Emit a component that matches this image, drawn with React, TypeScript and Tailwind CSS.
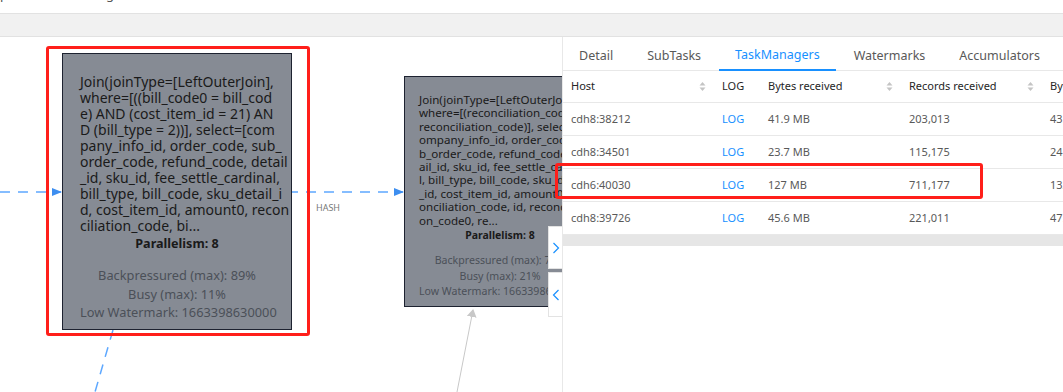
import React from "react";

const node1Lines = [
  "Join(joinType=[LeftOuterJoin],",
  "where=[((bill_code0 = bill_cod",
  "e) AND (cost_item_id = 21) AN",
  "D (bill_type = 2))], select=[com",
  "pany_info_id, order_code, sub_",
  "order_code, refund_code, detail",
  "_id, sku_id, fee_settle_cardinal,",
  "bill_type, bill_code, sku_detail_i",
  "d, cost_item_id, amount0, recon",
  "ciliation_code, bi...",
];

const node2Lines = [
  "Join(joinType=[LeftOuterJoin],",
  "where=[(reconciliation_code =",
  "reconciliation_code)], select=[c",
  "ompany_info_id, order_code, su",
  "b_order_code, refund_code, det",
  "ail_id, sku_id, fee_settle_cardina",
  "l, bill_type, bill_code, sku_detail",
  "_id, cost_item_id, amount0, rec",
  "onciliation_code, id, reconciliati",
  "on_code0, re...",
];

const rows = [
  { host: "cdh8:38212", bytes: "41.9 MB", recs: "203,013", sent: "43.2 MB" },
  { host: "cdh8:34501", bytes: "23.7 MB", recs: "115,175", sent: "24.5 MB" },
  { host: "cdh6:40030", bytes: "127 MB", recs: "711,177", sent: "132 MB" },
  { host: "cdh8:39726", bytes: "45.6 MB", recs: "221,011", sent: "47.1 MB" },
];

function SortIcon() {
  return (
    <svg width="7" height="11" viewBox="0 0 7 11" className="shrink-0">
      <path d="M3.5 1 L6.5 4.5 L0.5 4.5 Z" fill="#c4c4c4" />
      <path d="M3.5 10 L6.5 6.5 L0.5 6.5 Z" fill="#c4c4c4" />
    </svg>
  );
}

export default function App() {
  const tabs = ["Detail", "SubTasks", "TaskManagers", "Watermarks", "Accumulators"];
  return (
    <div
      className="relative w-[1063px] h-[392px] overflow-hidden bg-white"
      style={{ fontFamily: '"Noto Sans", "Open Sans", sans-serif' }}
    >
      {/* top cut-off text */}
      <div className="h-[13px] overflow-hidden">
        <div className="-mt-[16px] flex text-[13px] leading-[20px] text-[#555]">
          <span>p</span>
          <span className="ml-[98px]">g</span>
        </div>
      </div>
      <div className="h-[24px] bg-[#f1f1f1] border-y border-[#e2e2e2]" />

      <div className="flex h-[355px]">
        {/* canvas */}
        <div className="relative w-[562px] h-full overflow-hidden">
          <svg className="absolute left-0 top-0" width="562" height="355">
            <defs>
              <marker id="ab" markerWidth="10" markerHeight="8" refX="9" refY="4" orient="auto" markerUnits="userSpaceOnUse">
                <path d="M0 0 L10 4 L0 8 Z" fill="#3d8ef0" />
              </marker>
              <marker id="ag" markerWidth="8" markerHeight="10" refX="7" refY="5" orient="auto" markerUnits="userSpaceOnUse">
                <path d="M0 0 L8 5 L0 10 Z" fill="#c8c8c8" />
              </marker>
            </defs>
            <line x1="0" y1="155" x2="61" y2="155" stroke="#5ea8ff" strokeWidth="1.5" strokeDasharray="10 8" markerEnd="url(#ab)" />
            <line x1="292" y1="155" x2="403" y2="155" stroke="#5ea8ff" strokeWidth="1.5" strokeDasharray="10 8" strokeDashoffset="4" markerEnd="url(#ab)" />
            <line x1="113" y1="293" x2="95" y2="355" stroke="#5ea8ff" strokeWidth="1.5" strokeDasharray="10 8" />
            <line x1="457" y1="355" x2="473" y2="273" stroke="#c8c8c8" strokeWidth="1" markerEnd="url(#ag)" />
          </svg>
          <div className="absolute left-[316px] top-[166px] text-[9px] leading-[10px] text-[#777]">HASH</div>

          {/* node 1 */}
          <div className="absolute left-[62px] top-[16px] w-[230px] h-[277px] bg-[#868b94] border border-[#1d2230] pl-[17px] pt-[20px] text-[#1a1a1a]">
            <div className="text-[14px] leading-[16px] whitespace-nowrap">
              {node1Lines.map((l) => (
                <div key={l}>{l}</div>
              ))}
            </div>
            <div className="pr-[17px] mt-[2px] text-center text-[12.6px] leading-[16px] font-bold">Parallelism: 8</div>
            <div className="pr-[17px] mt-[14px] text-center text-[12.8px] leading-[18.5px] text-[#4b5058] whitespace-nowrap">
              <div>Backpressured (max): 89%</div>
              <div>Busy (max): 11%</div>
              <div>Low Watermark: 1663398630000</div>
            </div>
          </div>

          {/* red outline */}
          <div className="absolute left-[46px] top-[9px] w-[264px] h-[290px] border-[3px] border-[#ff1f1a] rounded-[3px]" />

          {/* node 2 */}
          <div className="absolute left-[404px] top-[39px] w-[192px] h-[231px] bg-[#868b94] border border-[#1d2230] pl-[14px] pt-[16px] text-[#1a1a1a] overflow-hidden">
            <div className="text-[11.6px] leading-[13.4px] whitespace-nowrap">
              {node2Lines.map((l) => (
                <div key={l}>{l}</div>
              ))}
            </div>
            <div className="pr-[14px] mt-[2px] text-center text-[10.5px] leading-[13.4px] font-bold">Parallelism: 8</div>
            <div className="pr-[14px] mt-[11px] text-center text-[10.6px] leading-[15.3px] text-[#4b5058] whitespace-nowrap">
              <div>Backpressured (max): 78%</div>
              <div>Busy (max): 21%</div>
              <div>Low Watermark: 1663398630000</div>
            </div>
          </div>
        </div>

        {/* right panel */}
        <div className="relative w-[501px] h-full border-l border-[#e8e8e8] bg-white">
          {/* toggle buttons */}
          <div className="absolute left-[-15px] top-[189px] w-[14px] h-[43px] bg-white border border-r-0 border-[#e3e3e3] flex items-center justify-center">
            <svg width="8" height="12" viewBox="0 0 8 12"><path d="M1.5 1 L6.5 6 L1.5 11" fill="none" stroke="#1890ff" strokeWidth="1.2" /></svg>
          </div>
          <div className="absolute left-[-15px] top-[235px] w-[14px] h-[45px] bg-white border border-r-0 border-[#e3e3e3] flex items-center justify-center">
            <svg width="8" height="12" viewBox="0 0 8 12"><path d="M6.5 1 L1.5 6 L6.5 11" fill="none" stroke="#1890ff" strokeWidth="1.2" /></svg>
          </div>

          {/* tabs */}
          <div className="flex h-[34px] border-b border-[#e8e8e8] text-[12.5px]">
            {tabs.map((t) => (
              <div
                key={t}
                className={
                  t === "TaskManagers"
                    ? "relative px-[16px] pt-[5px] mr-[2px] flex items-center text-[#1890ff] border-b-2 border-[#1890ff] -mb-px"
                    : "px-[16px] pt-[5px] mr-[2px] flex items-center text-[#595959]"
                }
              >
                {t}
              </div>
            ))}
          </div>

          {/* table */}
          <div className="overflow-hidden text-[11px]">
            <div className="grid grid-cols-[151px_46px_141px_141px_200px] h-[32px] border-b border-[#e8e8e8] text-[#262626]">
              <div className="flex items-center justify-between pl-[8px] pr-[8px]">
                <span>Host</span>
                <SortIcon />
              </div>
              <div className="flex items-center pl-[8px]">LOG</div>
              <div className="flex items-center justify-between pl-[8px] pr-[8px]">
                <span>Bytes received</span>
                <SortIcon />
              </div>
              <div className="flex items-center justify-between pl-[8px] pr-[8px]">
                <span>Records received</span>
                <SortIcon />
              </div>
              <div className="flex items-center pl-[8px] whitespace-nowrap">Bytes sent</div>
            </div>
            {rows.map((r) => (
              <div
                key={r.host}
                className="grid grid-cols-[151px_46px_141px_141px_200px] h-[33px] border-b border-[#e8e8e8] text-[#595959]"
              >
                <div className="flex items-center pl-[8px]">{r.host}</div>
                <div className="flex items-center pl-[8px] text-[#1890ff]">LOG</div>
                <div className="flex items-center pl-[8px]">{r.bytes}</div>
                <div className="flex items-center pl-[8px]">{r.recs}</div>
                <div className="flex items-center pl-[8px] whitespace-nowrap">{r.sent}</div>
              </div>
            ))}
            <div className="h-[11px] bg-[#e6e6e6]" />
          </div>
        </div>
      </div>

      {/* highlight over table row */}
      <div className="absolute left-[555px] top-[163px] w-[428px] h-[36px] border-[3px] border-[#ff1f1a] rounded-[3px]" />
    </div>
  );
}
